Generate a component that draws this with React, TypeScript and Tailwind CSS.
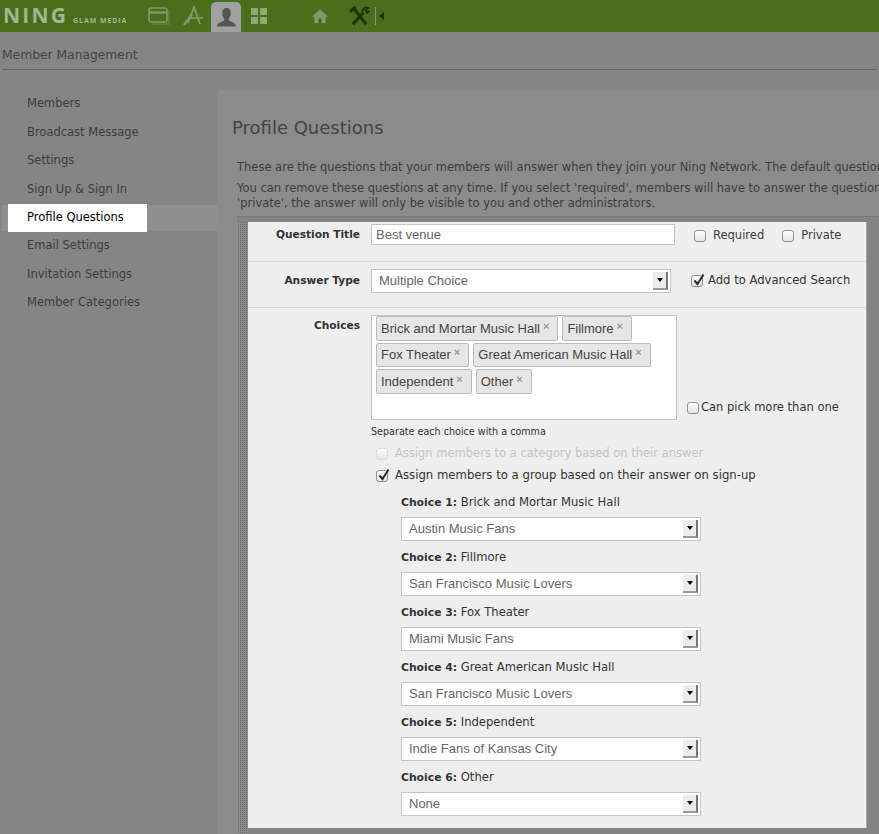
const sideItems = [
  "Members",
  "Broadcast Message",
  "Settings",
  "Sign Up & Sign In",
  "Profile Questions",
  "Email Settings",
  "Invitation Settings",
  "Member Categories",
]

const chips = [
  ["Brick and Mortar Music Hall", "Fillmore"],
  ["Fox Theater", "Great American Music Hall"],
  ["Independent", "Other"],
]

const groups = [
  ["Choice 1:", "Brick and Mortar Music Hall", "Austin Music Fans"],
  ["Choice 2:", "Fillmore", "San Francisco Music Lovers"],
  ["Choice 3:", "Fox Theater", "Miami Music Fans"],
  ["Choice 4:", "Great American Music Hall", "San Francisco Music Lovers"],
  ["Choice 5:", "Independent", "Indie Fans of Kansas City"],
  ["Choice 6:", "Other", "None"],
]

function Check({ checked, disabled }: { checked?: boolean; disabled?: boolean }) {
  return (
    <span className={`relative inline-block h-[12px] w-[12px] shrink-0 rounded-[3px] border bg-gradient-to-b from-white to-[#e4e4e4] ${disabled ? "border-[#dcdcdc]" : "border-[#8f8f8f]"}`}>
      {checked && (
        <svg viewBox="0 0 14 14" className="absolute -top-[3px] left-0 h-[14px] w-[14px]">
          <path d="M2.5 7.5 L5.5 11 L11.5 1.5" fill="none" stroke="#2a2a2a" strokeWidth="2" />
        </svg>
      )}
    </span>
  )
}

function Select({ value, className }: { value: string; className: string }) {
  return (
    <div className={`flex h-[24px] items-center border border-[#c4c4c4] bg-white font-['Liberation_Sans',sans-serif] text-[13px] text-[#666] ${className}`}>
      <span className="flex-1 pl-[7px]">{value}</span>
      <span className="mr-[2px] flex h-[18px] w-[15px] items-center justify-center border-r-2 border-b-2 border-r-[#777] border-b-[#999] bg-[#ececec]">
        <span className="h-0 w-0 border-x-[3px] border-t-[4px] border-x-transparent border-t-black" />
      </span>
    </div>
  )
}

function NavIcons() {
  return (
    <>
      <svg viewBox="0 0 22 18" className="ml-[21px] h-[18px] w-[22px]" fill="none" stroke="#7f9a66" strokeWidth="1.6">
        <rect x="1" y="1" width="18" height="14" rx="2" />
        <path d="M1 5.5 H19" strokeWidth="2.4" />
        <path d="M21 4 V17 H4" stroke="#628146" />
      </svg>
      <svg viewBox="0 0 22 22" className="ml-[12px] h-[22px] w-[22px]" fill="none" stroke="#7f9a66" strokeWidth="1.8">
        <path d="M6 18 L12 2 L18 19" />
        <path d="M7 13 H21" />
        <path d="M2 20 L10 9" strokeWidth="2.6" />
      </svg>
      <div className="ml-[7px] flex h-[30px] w-[30px] items-center justify-center self-end rounded-t-[5px] bg-[#a0a0a0]">
        <svg viewBox="0 0 20 20" className="h-[21px] w-[21px]" fill="#555">
          <path d="M10 1 C13 1 14.2 3.5 14 6.5 C13.8 9 12.8 10.5 12 11.5 C12 13 13 13.5 15 14.2 C17.5 15 19 15.8 19 18.5 H1 C1 15.8 2.5 15 5 14.2 C7 13.5 8 13 8 11.5 C7.2 10.5 6.2 9 6 6.5 C5.8 3.5 7 1 10 1 Z" />
        </svg>
      </div>
      <div className="ml-[10px] grid h-[16px] w-[16px] grid-cols-2 gap-[2px]">
        <span className="bg-[#8ea678]" />
        <span className="bg-[#8ea678]" />
        <span className="bg-[#8ea678]" />
        <span className="bg-[#8ea678]" />
      </div>
      <svg viewBox="0 0 20 18" className="ml-[45px] h-[16px] w-[16px]" fill="#7f9a66">
        <path d="M10 1 L20 10 H17 V18 H12 V12 H8 V18 H3 V10 H0 Z" />
      </svg>
      <svg viewBox="0 0 22 22" className="ml-[21px] h-[21px] w-[21px]" fill="none" stroke="#1f330a" strokeWidth="3.2">
        <path d="M4 19 L15 7" />
        <path d="M6 4 L18 19" />
        <path d="M1 6 L7 1" />
        <path d="M14 6 C14 2 17 1 20 2 L17 5 L19 7 L21 5" strokeWidth="2" />
      </svg>
      <span className="ml-[5px] h-[18px] w-px bg-[#7f9a66]" />
      <span className="ml-[3px] h-0 w-0 border-y-[4px] border-r-[5px] border-y-transparent border-r-[#1f330a]" />
    </>
  )
}

export default function App() {
  return (
    <div className="h-[834px] w-[879px] overflow-hidden bg-[#858585] font-['DejaVu_Sans',sans-serif] text-[11.5px] text-[#3d3d3d]">
      <div className="flex h-[32px] items-center bg-[#4a6f1c]">
        <div className="flex w-[127px] shrink-0 items-baseline whitespace-nowrap pl-[3px] font-['Open_Sans',sans-serif]">
          <span className="text-[21px] font-bold leading-none tracking-[2.2px] text-[#a3b58f]">NING</span>
          <span className="ml-[5px] text-[7px] font-bold tracking-[0.9px] text-[#a3b58f]">GLAM MEDIA</span>
        </div>
        <NavIcons />
      </div>

      <div className="mx-[2px] flex h-[38px] items-center border-b border-[#666] pt-[9px] text-[12.3px] text-[#444]">
        Member Management
      </div>

      <div className="flex pt-[20px]">
        <div className="-mt-[0.5px] w-[217px] shrink-0">
          {sideItems.map((item) =>
            item === "Profile Questions" ? (
              <div key={item} className="my-[1px] ml-[2px] flex h-[26px] items-center bg-[#8f8f8f]">
                <div className="-my-px ml-[6px] flex h-[28px] w-[139px] items-center bg-white pl-[19px] text-black">{item}</div>
              </div>
            ) : (
              <div key={item} className="flex h-[28.5px] items-center pl-[27px]">{item}</div>
            )
          )}
        </div>

        <div className="h-[760px] flex-1 overflow-hidden rounded-tl-[5px] bg-[#8b8b8b] pl-[15px]">
          <h1 className="pt-[26px] text-[18px] leading-[24px] text-[#444]">Profile Questions</h1>
          <div className="ml-[5px] mt-[20px] w-[900px] leading-[15px]">
            <p>These are the questions that your members will answer when they join your Ning Network. The default questions</p>
            <p className="mt-[6px]">You can remove these questions at any time. If you select 'required', members will have to answer the question</p>
            <p>'private', the answer will only be visible to you and other administrators.</p>
          </div>

          <div className="ml-[5px] mt-[5px] flex h-[620px] border-t border-[#777] bg-[#838383] pt-[5px]">
            <div className="w-[11px] shrink-0 bg-[conic-gradient(#666_25%,#8c8c8c_0)] bg-[length:2px_2px]" />
            <div className="h-[606px] w-[619px] shrink-0 border-r border-[#a8a8a8] bg-[#eeeeee]">
              <div className="flex h-[40px] items-start border-b border-[#d8d8d8] pt-[2px]">
                <div className="w-[112px] pt-[3px] text-right text-[10.6px] font-bold text-[#333]">Question Title</div>
                <div className="ml-[11px] flex h-[21px] w-[304px] items-center border border-[#c4c4c4] bg-white pl-[4px] font-['Liberation_Sans',sans-serif] text-[13px] text-[#666]">Best venue</div>
                <label className="ml-[19px] mt-[3px] flex items-center gap-[7px]"><Check />Required</label>
                <label className="ml-[18px] mt-[3px] flex items-center gap-[7px]"><Check />Private</label>
              </div>

              <div className="flex h-[46px] items-start border-b border-[#d8d8d8] pt-[7px]">
                <div className="w-[112px] pt-[4px] text-right text-[10.6px] font-bold text-[#333]">Answer Type</div>
                <Select value="Multiple Choice" className="ml-[11px] w-[300px]" />
                <label className="ml-[20px] mt-[3px] flex items-center gap-[5px] text-[11.6px] text-[#333]"><Check checked />Add to Advanced Search</label>
              </div>

              <div className="flex pt-[7px]">
                <div className="w-[112px] pt-[3px] text-right text-[10.6px] font-bold text-[#333]">Choices</div>
                <div className="ml-[11px]">
                  <div className="h-[105px] w-[306px] border border-[#c4c4c4] bg-white pl-[4px]">
                    {chips.map((row) => (
                      <div key={row[0]} className="mb-[2px] flex h-[24.5px] gap-[4px] font-['Liberation_Sans',sans-serif] text-[13px] text-[#444]">
                        {row.map((c) => (
                          <span key={c} className="flex items-center rounded-[2px] border border-[#bbb] bg-[#e6e6e6] pl-[4px] pr-[8px]">
                            {c}
                            <span className="ml-[3px] -translate-y-[2px] text-[11px] font-bold leading-none text-[#999]">×</span>
                          </span>
                        ))}
                      </div>
                    ))}
                  </div>
                  <div className="mt-[5px] text-[9.6px] leading-[14px] text-[#333]">Separate each choice with a comma</div>
                </div>
                <label className="ml-[10px] mt-[86px] flex h-[14px] items-center gap-[2px] text-[#333]"><Check />Can pick more than one</label>
              </div>

              <div className="ml-[128px] mt-[7px] flex h-[16px] items-center gap-[7px] text-[#c4c4c4]"><Check disabled />Assign members to a category based on their answer</div>
              <div className="ml-[128px] mt-[6px] flex h-[16px] items-center gap-[7px] text-[11.7px] text-[#333]"><Check checked />Assign members to a group based on their answer on sign-up</div>

              <div className="ml-[153px] mt-[11px]">
                {groups.map(([label, name, value]) => (
                  <div key={label} className="mb-[9px]">
                    <div className="h-[15px] text-[11.6px] leading-[15px] text-[#333]"><b className="text-[10.8px]">{label}</b> {name}</div>
                    <Select value={value} className="mt-[7px] w-[300px]" />
                  </div>
                ))}
              </div>
            </div>
          </div>
        </div>
      </div>
    </div>
  )
}
